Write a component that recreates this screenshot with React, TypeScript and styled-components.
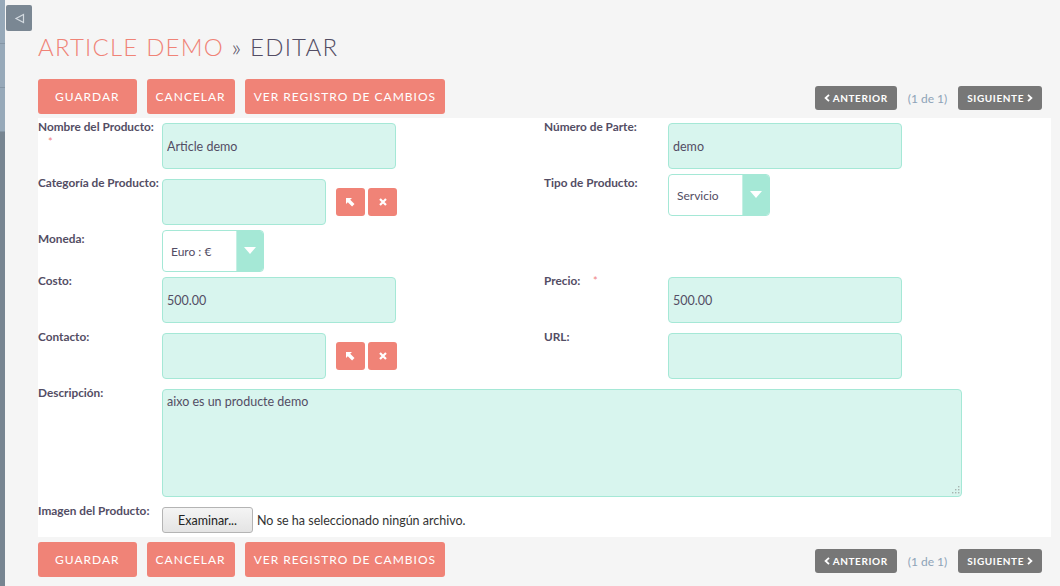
import React from 'react';
import styled, { createGlobalStyle } from 'styled-components';

const GlobalStyle = createGlobalStyle`
  html, body {
    margin: 0;
    padding: 0;
    background: #f5f5f5;
    font-family: Lato, "Open Sans", sans-serif;
    color: #534d64;
  }
`;

const salmon = '#f08377';
const mint = '#d8f5ee';
const mintBorder = '#a5e8d6';

const Page = styled.div`
  display: flex;
  min-height: 586px;
  position: relative;
`;

const SideStrip = styled.div`
  width: 5px;
  display: flex;
  flex-direction: column;
  background: #778591;
`;

const SideItem = styled.div`
  height: 43px;
  background: #97a9b9;
  border-bottom: 1px solid #8596a5;
`;

const SideToggle = styled.button`
  position: absolute;
  left: 6px;
  top: 5px;
  width: 26px;
  height: 26px;
  padding: 0;
  border: 0;
  border-radius: 2px;
  background: #7a8793;
  display: flex;
  align-items: center;
  justify-content: center;
`;

const Main = styled.main`
  flex: 1;
  padding: 0 9px 0 33px;
`;

const Title = styled.h2`
  margin: 0;
  padding: 32px 0 17px;
  font-size: 24px;
  line-height: 30px;
  font-weight: 300;
  letter-spacing: 1.2px;
  color: #534d64;
`;

const TitleModule = styled.span`
  color: ${salmon};
`;

const ActionBar = styled.div<{ $top?: number }>`
  display: flex;
  align-items: center;
  justify-content: space-between;
  margin-top: ${(p) => p.$top ?? 0}px;
`;

const ButtonGroup = styled.div`
  display: flex;
  gap: 10px;
`;

const ActionButton = styled.button<{ $primary?: boolean }>`
  height: 35px;
  padding: 0 ${(p) => (p.$primary ? 17 : 9)}px;
  border: 0;
  border-radius: 3px;
  background: ${salmon};
  color: #fff;
  font-family: Lato, sans-serif;
  font-size: 12px;
  letter-spacing: 1px;
  text-transform: uppercase;
`;

const Pager = styled.div`
  display: flex;
  align-items: center;
  gap: 11px;
  margin: 3px 9px 0 0;
`;

const PagerButton = styled.button`
  height: 24px;
  padding: 0 9px;
  border: 0;
  border-radius: 3px;
  background: #777;
  color: #fff;
  font-family: Lato, sans-serif;
  font-size: 10px;
  font-weight: 700;
  letter-spacing: 0.6px;
  display: flex;
  align-items: center;
  gap: 3px;
`;

const PagerCount = styled.span`
  font-size: 12px;
  color: #8ea3b8;
`;

const Panel = styled.section`
  background: #fff;
  margin-top: 4px;
  padding-bottom: 4px;
`;

const Row = styled.div`
  display: grid;
  grid-template-columns: 124px 382px 124px 1fr;
  align-items: start;
`;

const Label = styled.div`
  padding-top: 1px;
  font-size: 11.8px;
  line-height: 15px;
  font-weight: 700;
  color: #534d64;
`;

const Required = styled.span`
  margin-left: 10px;
  color: #ef7f7f;
  font-weight: 400;
  font-size: 11px;
`;

const Field = styled.div<{ $span?: number }>`
  display: flex;
  align-items: center;
  grid-column: span ${(p) => p.$span ?? 1};
`;

const TextInput = styled.input<{ $w?: number }>`
  box-sizing: border-box;
  width: ${(p) => p.$w ?? 234}px;
  height: 46px;
  margin: 5px 0;
  padding: 0 4px;
  border: 1px solid ${mintBorder};
  border-radius: 4px;
  background: ${mint};
  font-family: Lato, sans-serif;
  font-size: 12.5px;
  color: #534d64;
  outline: none;
`;

const RelateButtons = styled.div`
  display: flex;
  gap: 3px;
  margin-left: 10px;
`;

const SmallButton = styled.button`
  width: 29px;
  height: 28px;
  padding: 0;
  border: 0;
  border-radius: 3px;
  background: ${salmon};
  display: flex;
  align-items: center;
  justify-content: center;
`;

const Select = styled.div`
  box-sizing: border-box;
  width: 102px;
  height: 42px;
  display: flex;
  border: 1px solid ${mintBorder};
  border-radius: 4px;
  background: #fff;
  overflow: hidden;
`;

const SelectValue = styled.span`
  flex: 1;
  display: flex;
  align-items: center;
  padding-left: 8px;
  font-size: 12px;
  color: #534d64;
`;

const SelectArrow = styled.span`
  width: 26px;
  display: flex;
  align-items: center;
  justify-content: center;
  background: ${mintBorder};
  border-left: 1px solid #c5f0e4;
`;

const TextAreaWrap = styled.div`
  position: relative;
  margin: 5px 0;
`;

const TextArea = styled.textarea`
  box-sizing: border-box;
  display: block;
  width: 800px;
  height: 108px;
  padding: 4px;
  border: 1px solid ${mintBorder};
  border-radius: 4px;
  background: ${mint};
  font-family: Lato, sans-serif;
  font-size: 12.5px;
  line-height: 16px;
  color: #534d64;
  resize: none;
  outline: none;
`;

const Grip = styled.svg`
  position: absolute;
  right: 2px;
  bottom: 2px;
`;

const FileField = styled.div`
  display: flex;
  align-items: center;
  gap: 4px;
  margin-top: 5px;
`;

const FileButton = styled.button`
  box-sizing: border-box;
  width: 91px;
  height: 26px;
  border: 1px solid #b4b4b4;
  border-radius: 3px;
  background: linear-gradient(#f4f4f4, #e4e4e4);
  font-family: Lato, sans-serif;
  font-size: 12.5px;
  color: #222;
`;

const FileName = styled.span`
  font-size: 12.5px;
  color: #333;
`;

const ChevronLeft = () => (
  <svg width="6" height="8" viewBox="0 0 6 8">
    <path d="M5 0.8 L1.6 4 L5 7.2" stroke="#fff" strokeWidth="1.8" fill="none" />
  </svg>
);

const ChevronRight = () => (
  <svg width="6" height="8" viewBox="0 0 6 8">
    <path d="M1 0.8 L4.4 4 L1 7.2" stroke="#fff" strokeWidth="1.8" fill="none" />
  </svg>
);

const SelectIcon = () => (
  <svg width="9" height="9" viewBox="0 0 9 9">
    <path d="M0 0 L6 0 L4.2 1.8 L8.5 6.1 L6.1 8.5 L1.8 4.2 L0 6 Z" fill="#fff" />
  </svg>
);

const ClearIcon = () => (
  <svg width="8" height="8" viewBox="0 0 8 8">
    <path d="M1 1 L7 7 M7 1 L1 7" stroke="#fff" strokeWidth="2.2" />
  </svg>
);

const DownTriangle = () => (
  <svg width="12" height="8" viewBox="0 0 12 8">
    <path d="M0 0 L12 0 L6 7 Z" fill="#fff" />
  </svg>
);

const RelateField = () => (
  <Field>
    <TextInput $w={164} readOnly value="" />
    <RelateButtons>
      <SmallButton>
        <SelectIcon />
      </SmallButton>
      <SmallButton>
        <ClearIcon />
      </SmallButton>
    </RelateButtons>
  </Field>
);

const Actions = ({ top }: { top: number }) => (
  <ActionBar $top={top}>
    <ButtonGroup>
      <ActionButton $primary>Guardar</ActionButton>
      <ActionButton>Cancelar</ActionButton>
      <ActionButton>Ver registro de cambios</ActionButton>
    </ButtonGroup>
    <Pager>
      <PagerButton>
        <ChevronLeft />
        ANTERIOR
      </PagerButton>
      <PagerCount>(1 de 1)</PagerCount>
      <PagerButton>
        SIGUIENTE
        <ChevronRight />
      </PagerButton>
    </Pager>
  </ActionBar>
);

export default function App() {
  return (
    <Page>
      <GlobalStyle />
      <SideStrip>
        <SideItem />
        <SideItem />
        <SideItem />
      </SideStrip>
      <SideToggle>
        <svg width="11" height="11" viewBox="0 0 11 11">
          <path d="M9.5 1.5 L9.5 9.5 L2 5.5 Z" stroke="#d3dae0" strokeWidth="1.2" fill="none" />
        </svg>
      </SideToggle>
      <Main>
        <Title>
          <TitleModule>ARTICLE DEMO</TitleModule> » EDITAR
        </Title>
        <Actions top={0} />
        <Panel>
          <Row>
            <Label>
              Nombre del Producto: <Required>*</Required>
            </Label>
            <Field>
              <TextInput readOnly value="Article demo" />
            </Field>
            <Label>Número de Parte:</Label>
            <Field>
              <TextInput readOnly value="demo" />
            </Field>
          </Row>
          <Row>
            <Label>Categoría de Producto:</Label>
            <RelateField />
            <Label>Tipo de Producto:</Label>
            <Field>
              <Select>
                <SelectValue>Servicio</SelectValue>
                <SelectArrow>
                  <DownTriangle />
                </SelectArrow>
              </Select>
            </Field>
          </Row>
          <Row>
            <Label>Moneda:</Label>
            <Field>
              <Select>
                <SelectValue>Euro : €</SelectValue>
                <SelectArrow>
                  <DownTriangle />
                </SelectArrow>
              </Select>
            </Field>
          </Row>
          <Row>
            <Label>Costo:</Label>
            <Field>
              <TextInput readOnly value="500.00" />
            </Field>
            <Label>
              Precio: <Required>*</Required>
            </Label>
            <Field>
              <TextInput readOnly value="500.00" />
            </Field>
          </Row>
          <Row>
            <Label>Contacto:</Label>
            <RelateField />
            <Label>URL:</Label>
            <Field>
              <TextInput readOnly value="" />
            </Field>
          </Row>
          <Row>
            <Label>Descripción:</Label>
            <Field $span={3}>
              <TextAreaWrap>
                <TextArea readOnly value="aixo es un producte demo" />
                <Grip width="10" height="10" viewBox="0 0 10 10">
                  {[
                    [8, 1], [8, 4], [5, 4], [8, 7], [5, 7], [2, 7],
                  ].map(([x, y]) => (
                    <rect key={`${x}-${y}`} x={x} y={y} width="1.4" height="1.4" fill="#a9b4b0" />
                  ))}
                </Grip>
              </TextAreaWrap>
            </Field>
          </Row>
          <Row>
            <Label>Imagen del Producto:</Label>
            <Field $span={3}>
              <FileField>
                <FileButton>Examinar...</FileButton>
                <FileName>No se ha seleccionado ningún archivo.</FileName>
              </FileField>
            </Field>
          </Row>
        </Panel>
        <Actions top={5} />
      </Main>
    </Page>
  );
}
